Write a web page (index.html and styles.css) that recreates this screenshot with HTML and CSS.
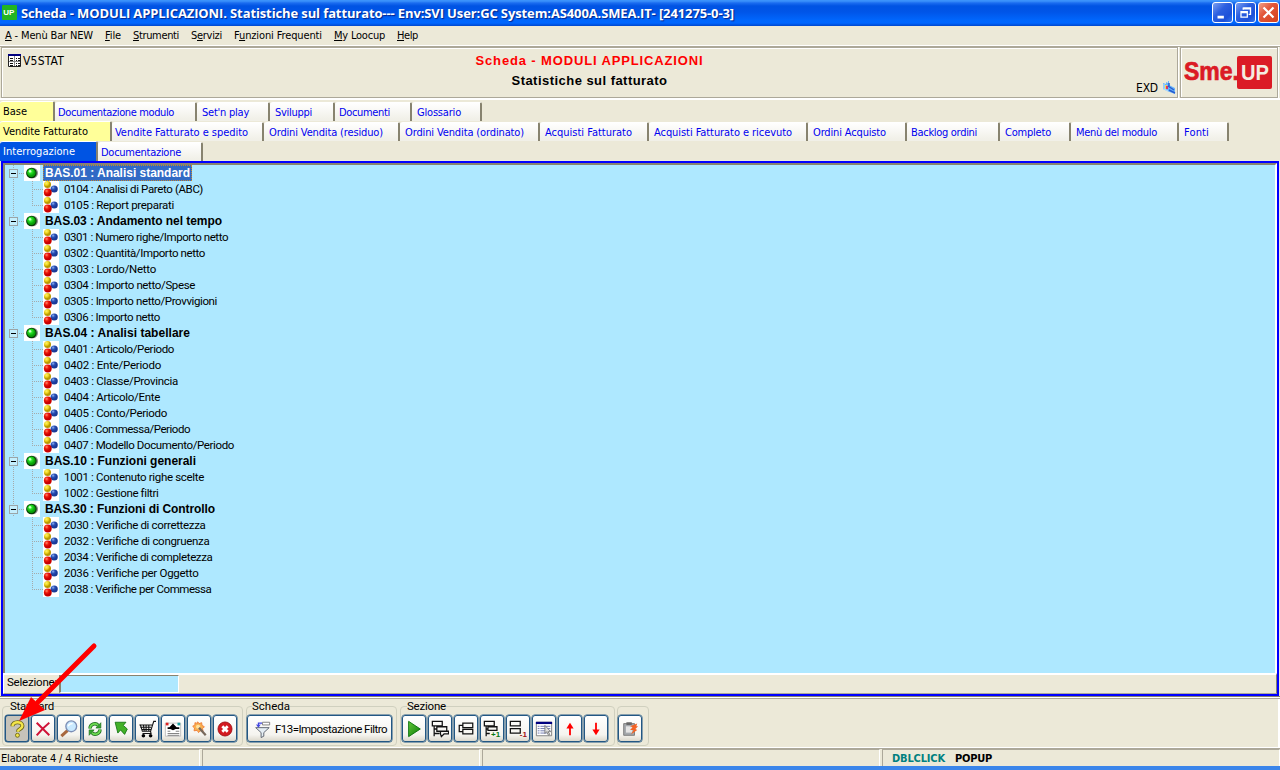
FILE: index.html
```html
<!DOCTYPE html>
<html lang="it">
<head>
<meta charset="utf-8">
<title>Scheda - MODULI APPLICAZIONI</title>
<link rel="stylesheet" href="styles.css">
</head>
<body>
<svg width="0" height="0" class="defs">
  <defs>
    <radialGradient id="gy" cx=".35" cy=".3"><stop offset="0" stop-color="#fff36b"/><stop offset=".6" stop-color="#ecd21c"/><stop offset="1" stop-color="#b99a00"/></radialGradient>
    <radialGradient id="gr" cx=".35" cy=".3"><stop offset="0" stop-color="#ff8a6a"/><stop offset=".5" stop-color="#ee1a0d"/><stop offset="1" stop-color="#c80000"/></radialGradient>
    <radialGradient id="gb" cx=".35" cy=".3"><stop offset="0" stop-color="#8fb0f0"/><stop offset=".5" stop-color="#2a52b8"/><stop offset="1" stop-color="#1a3a98"/></radialGradient>
    <radialGradient id="gg" cx=".4" cy=".35"><stop offset="0" stop-color="#6cff5c"/><stop offset=".5" stop-color="#22d822"/><stop offset="1" stop-color="#08a008"/></radialGradient>
    <linearGradient id="play" x1="0" y1="0" x2="1" y2="1"><stop offset="0" stop-color="#63c837"/><stop offset="1" stop-color="#087a08"/></linearGradient>
  </defs>
  <symbol id="led" viewBox="0 0 16 16"><path fill="#fff" d="M0 0h16v16H0z"/><circle cx="8.800" cy="8" r="5.200" fill="#8b8b8b"/><circle cx="7.400" cy="8" r="5.300" fill="#063b06"/><circle cx="7.300" cy="7.800" r="4.300" fill="url(#gg)"/><circle cx="6" cy="6.300" r="1.200" fill="#c8ffc0"/></symbol>
  <symbol id="balls" viewBox="0 0 16 16"><path fill="#fff" d="M0 0h16v16H0z"/><circle cx="4.500" cy="3.500" r="3.500" fill="url(#gy)"/><circle cx="11.200" cy="8" r="3.600" fill="url(#gb)"/><circle cx="4.800" cy="11.500" r="3.900" fill="url(#gr)"/></symbol>
</svg>

<header class="titlebar">
  <svg class="app" viewBox="0 0 15 15"><rect width="15" height="15" rx="1" fill="#22b522"/><text x="1.300" y="10" font-family="Liberation Sans" font-weight="bold" font-size="8" fill="#fff">UP</text></svg>
  <span class="title" data-w="713">Scheda - MODULI APPLICAZIONI. Statistiche sul fatturato--- Env:SVI User:GC System:AS400A.SMEA.IT- [241275-0-3]</span>
  <div class="winbtns">
    <svg viewBox="0 0 21 21"><path d="M5 14h7v3H5z" fill="#fff"/></svg>
    <svg viewBox="0 0 21 21"><path d="M8 5.500h8v7h-2M8 5v2.500M8 6.500h8" fill="none" stroke="#fff" stroke-width="1.500"/><path d="M5.500 9.500h7v6h-7zM5 10.500h8" fill="none" stroke="#fff" stroke-width="1.400"/></svg>
    <svg class="close" viewBox="0 0 21 21"><path d="M5 5l11 11M16 5L5 16" stroke="#fff" stroke-width="2.500"/></svg>
  </div>
</header>

<nav class="menu">
  <span class="m1"><b data-w="88"><u>A</u> - Menù Bar NEW</b></span>
  <span class="m2"><b data-w="16"><u>F</u>ile</b></span>
  <span class="m3"><b data-w="46"><u>S</u>trumenti</b></span>
  <span class="m4"><b data-w="31">S<u>e</u>rvizi</b></span>
  <span class="m5"><b data-w="88">F<u>u</u>nzioni Frequenti</b></span>
  <span class="m6"><b data-w="51"><u>M</u>y Loocup</b></span>
  <span class="m7"><b data-w="21"><u>H</u>elp</b></span>
</nav>

<section class="head">
  <div class="info">
    <div class="code">
      <svg width="15" height="15" viewBox="0 0 15 15"><path d="M1.500 1.500h12v12h-12z" fill="#fff" stroke="#222"/><path d="M1 1h13v2H1z" fill="#000080"/><path d="M7.500 3v10M2 8.500h11" stroke="#888"/><path d="M3 5.500h3M9 5.500h1M11 5.500h2M3 7.500h3M9 7.500h1M11 7.500h2M3 10.500h3M9 10.500h1M11 10.500h2M3 12.500h3M9 12.500h1M11 12.500h2" stroke="#111"/></svg>
      <span data-w="41">V5STAT</span>
    </div>
    <div class="center"><div class="red"><span data-w="228">Scheda - MODULI APPLICAZIONI</span></div><div><span data-w="156">Statistiche sul fatturato</span></div></div>
    <div class="exd"><span data-w="22">EXD</span>
      <svg width="14" height="14" viewBox="0 0 14 14"><path d="M1 2l3 1V1l2 1V0h1v4l6 3v6L5 10 1 8z" fill="#68b5fa"/><path d="M3 4h2v4H3z" fill="#f7d45a"/><path d="M4 5h2v3H4z" fill="#dd3565"/><path d="M6 5l6 4M7 9l6 3M7 2v3" stroke="#275bd0" stroke-width="1.500"/><path d="M2 3v5l4 2" stroke="#bce4ff" fill="none"/></svg>
    </div>
  </div>
  <div class="logo">
    <svg width="90" height="36" viewBox="0 0 90 36"><rect x="53" y="0" width="35" height="33" rx="2" fill="#db1b25"/><text x="0" y="24" font-family="Liberation Sans" font-weight="bold" font-size="25" fill="#db1b25" stroke="#db1b25" stroke-width=".7" textLength="55" lengthAdjust="spacingAndGlyphs">Sme.</text><text x="57" y="24" font-family="Liberation Sans" font-weight="bold" font-size="22" fill="#f4ece0" textLength="28" lengthAdjust="spacingAndGlyphs">UP</text></svg>
  </div>
</section>

<div class="tabs" id="tabs"></div>

<main class="frame">
  <div class="tree" id="tree"></div>
  <div class="selbar"><span data-w="50">Selezione:</span><div class="field"></div><div class="rest"></div></div>
</main>

<section class="toolbar">
  <fieldset class="g1"><legend data-w="44">Standard</legend>
    <button class="pressed"><svg viewBox="0 0 20 20"><path d="M5 7c0-6 11-6 11-.5 0 4-5 3-5 6.500" fill="none" stroke="#6d6618" stroke-width="4.500"/><path d="M5 7c0-6 11-6 11-.5 0 4-5 3-5 6.500" fill="none" stroke="#f4e64a" stroke-width="2.700"/><circle cx="10.500" cy="17" r="2.200" fill="#f4e64a" stroke="#6d6618"/></svg></button>
    <button><svg viewBox="0 0 20 20"><path d="M3 3c4 4 9 9 14 14M17 3C12 7 7 12 3 17" fill="none" stroke="#cf1237" stroke-width="2.200"/></svg></button>
    <button><svg viewBox="0 0 20 20"><path d="M8.500 11.500l-7 6.500" stroke="#a8683e" stroke-width="3.400"/><circle cx="12.500" cy="7" r="6" fill="#c9e9ff" stroke="#7c8eb5" stroke-width="1.500"/><path d="M9 7c1-3 3-3 5-3" fill="none" stroke="#fff" stroke-width="1.500"/></svg></button>
    <button><svg viewBox="0 0 20 20"><path d="M4.500 9.500c0-5 6-7 9-3.500M15.500 10.500c0 5-6 7-9 3.500" fill="none" stroke="#19691a" stroke-width="3.800"/><path d="M4.500 9.500c0-5 6-7 9-3.500M15.500 10.500c0 5-6 7-9 3.500" fill="none" stroke="#6cd850" stroke-width="2.200"/><path d="M16.500 3v6H11zM3.500 17v-6H9z" fill="#32a42b" stroke="#19691a" stroke-width=".7"/></svg></button>
    <button><svg viewBox="0 0 20 20"><path d="M3.500 2.500h12L12.500 6l4.500 4-3 6-4.500-5-3 3.500z" fill="#43b128" stroke="#187817"/></svg></button>
    <button><svg viewBox="0 0 20 20"><path d="M20 1.500h-2.500l-3.500 11H5M1.500 5.500h14M2.500 8h12M4 10.500h10M2.500 5l2.500 8M6 5l1 8M9 5v8M12 5v8M14 13l.5 2H5" fill="none" stroke="#111" stroke-width="1.200"/><circle cx="6" cy="17.500" r="2"/><circle cx="14" cy="17.500" r="2"/></svg></button>
    <button><svg viewBox="0 0 20 20"><path d="M1.500 3.500h17v14.500h-17z" fill="#fff" stroke="#bbb"/><path d="M2 3h3v3H2z" fill="#d22"/><path d="M15 3h3v3h-3z" fill="#19a0a0"/><path d="M10 4l4 4h3v2h-4l-3 1.500L7 10H4V8h2z"/><path d="M4 12.500h3M13 12.500h4M4 15h13M4 17h13" stroke="#777"/></svg></button>
    <button><svg viewBox="0 0 20 20"><path d="M8.500 2l1.500 2 3-1 .3 3 2.700 1.500-2 2 .5 3-3-.5-2 2-1.500-2.500-3.500.5.500-3-2-2 2.500-1.500V3l3 .8z" fill="#f9b050" stroke="#ee7c34"/><circle cx="9" cy="7.500" r="2.300" fill="#ffe3a0"/><path d="M10 8.500l7.500 8.500" stroke="#77695c" stroke-width="2.500"/></svg></button>
    <button><svg viewBox="0 0 20 20"><circle cx="10" cy="10" r="7.800" fill="#d31920" stroke="#9e0d12"/><path d="M7 7l6 6M13 7l-6 6" stroke="#fff" stroke-width="3"/></svg></button>
  </fieldset>
  <fieldset class="g2"><legend data-w="38">Scheda</legend>
    <button class="wide"><svg viewBox="0 0 20 20"><path d="M3 8.500h15l-6 5.500v4l-3 1.500V14z" fill="#e5eef4" stroke="#555b68"/><path d="M10.500 2.500h8v3h-8z" fill="#fff" stroke="#777"/><path d="M10 3.500H6v4M4 5l2 2.500L8 5" fill="none" stroke="#4146e0" stroke-width="1.300"/></svg><span data-w="112">F13=Impostazione Filtro</span></button>
  </fieldset>
  <fieldset class="g3"><legend data-w="39">Sezione</legend>
    <button><svg viewBox="0 0 20 20"><path d="M4 1.500v17L17 10z" fill="url(#play)" stroke="#08700b"/></svg></button>
    <button><svg class="ln" viewBox="0 0 20 20"><path d="M1.500 1.500h11v5h-11zM6.500 7.500h11v5h-11zM10.500 12.500h9v3h-5l-3 3-1-3zM3.500 7v11M3.500 10h3M3.500 15h6"/></svg></button>
    <button><svg class="ln" viewBox="0 0 20 20"><path d="M6.500 3.500h11v5h-11zM6.500 10.500h11v5h-11zM6 6H2.500v7H6"/></svg></button>
    <button><svg class="ln" viewBox="0 0 20 20"><path d="M1.500 1.500h11v5h-11zM5.500 7.500h10v4h-10zM3.500 7v11M3.500 10h2M3.500 15h4"/><text x="9" y="19" font-size="9" fill="#087a16">+1</text></svg></button>
    <button><svg class="ln" viewBox="0 0 20 20"><path d="M1.500 1.500h11v5h-11zM1.500 9.500h11v5h-11z"/><text x="12" y="19" font-size="9" fill="#a01016">-1</text></svg></button>
    <button><svg viewBox="0 0 20 20"><path d="M1.500 2.500h17v15h-17z" fill="#fff" stroke="#777"/><path d="M1 2h18v2.500H1z" fill="#000080"/><path d="M3 7h2M6 7h11M3 9.500h2M6 9.500h11M3 12h2M6 12h11M3 14.500h2M6 14.500h7" stroke="#6670aa"/><path d="M11 6v9l2-2 2 4 1.500-1-2-3h3z" fill="#ddd" stroke="#777"/></svg></button>
    <button><svg viewBox="0 0 20 20"><path d="M10 3l4 6.500h-3V17H9V9.500H6z" fill="#f00"/></svg></button>
    <button><svg viewBox="0 0 20 20"><path d="M10 17l4-6.500h-3V3H9v7.500H6z" fill="#f00"/></svg></button>
  </fieldset>
  <fieldset class="g4">
    <button><svg viewBox="0 0 20 20"><path d="M3 4h12v13H3z" fill="#a5a9ad" stroke="#777"/><path d="M5.500 7h7v7h-7z" fill="#e4e4e4"/><path d="M6 2.500h6v3H6z" fill="#666"/><path d="M18 4l-8 3 3 1-3 3h4l-3 5 7-5-2-1 3-3h-2z" fill="#f36324"/></svg></button>
  </fieldset>
</section>

<footer class="status">
  <div class="s1"><span data-w="117">Elaborate 4 / 4 Richieste</span></div><div class="s2"></div><div class="s3"></div>
  <div class="s4"><span class="teal" data-w="53">DBLCLICK</span><span data-w="37">POPUP</span></div>
</footer>
<div class="bottom"></div>
<svg class="arrow" width="100" height="90" viewBox="0 0 100 90"><path d="M94 5L38 61" stroke="#f00" stroke-width="5" stroke-linecap="round"/><path d="M19 80L31 56 45 69z" fill="#f00"/></svg>
<script src="app.js"></script>
</body>
</html>
```
FILE: styles.css
```css
* { box-sizing: border-box; }
body { margin: 0; width: 1280px; height: 770px; overflow: hidden; background: #ece9d8; color: #000; display: flex; flex-direction: column; position: relative; font: 11px/16px "DejaVu Sans Condensed", "Noto Sans", sans-serif; }
svg { display: block; }
[data-w] { white-space: nowrap; display: inline-block; }
.defs { position: absolute; }
.titlebar { height: 26px; flex: none; display: flex; align-items: center; padding: 0 2px; background: linear-gradient(#3b92fb 0, #3b92fb 1px, #1a6cf0 3px, #0053e3 6px, #0055e8 12px, #0066fc 20px, #0067ff 23px, #0047cd 26px); }
.app { width: 15px; height: 15px; margin: -2px 4px 0 0; }
.title { flex: none; color: #fff; font: bold 13px/24px "Open Sans", "Noto Sans", sans-serif; text-shadow: 1px 1px 1px #06258a; }
.winbtns { display: flex; gap: 2px; margin: -1px -1px 0 auto; }
.winbtns svg { width: 21px; height: 21px; border: 1px solid #fff; border-radius: 3px; background: linear-gradient(135deg, #7d9ff0, #2c5fe0 40%, #1c50d8 75%, #3477ee); }
.winbtns .close { background: linear-gradient(135deg, #f0a088, #e2573a 40%, #d5401c); }
.menu { height: 20px; flex: none; display: flex; padding: 2px 0 0 5px; border-bottom: 1px solid #fff; }
.menu b { font-weight: normal; }
.menu u { text-underline-offset: 1px; }
.menu span { flex: none; }
.m1 { width: 100px; } .m2 { width: 28px; } .m3 { width: 58px; } .m4 { width: 43px; } .m5 { width: 100px; } .m6 { width: 63px; }
.head { height: 54px; flex: none; display: flex; gap: 2px; padding: 0 2px 0 1px; border-top: 1px solid #aca899; border-bottom: 2px solid #fff; }
.info, .logo { border: 1px solid #aca899; box-shadow: inset 1px 1px #fff, 1px 0 #fff; }
.info { width: 1177px; display: grid; grid-template-columns: 200px 1fr 200px; }
.code { display: flex; padding: 5px 0 0 5px; gap: 1px; font-size: 12px; }
.center { font: bold 13px/20px "Liberation Sans", sans-serif; text-align: center; padding-top: 3px; }
.red { color: #f00; }
.exd { display: flex; justify-content: flex-end; align-items: flex-end; gap: 4px; padding: 0 1px 1px 0; font-size: 12px; }
.exd svg { margin-bottom: 1px; }
.logo { flex: 1; padding: 8px 0 0 3px; }
.tabs { height: 61px; flex: none; padding-top: 1px; }
.tabrow { height: 20px; display: flex; }
.tab { flex: none; height: 19px; margin-top: 1px; border-right: 2px solid #87836f; border-top: 1px solid #fff; border-radius: 3px 2px 0 0; background: linear-gradient(#fff, #f1f0e8 90%); color: #0000f0; line-height: 20px; }
.tab.on { height: 20px; margin-top: 0; background: #ffff99; color: #000; line-height: 19px; }
.tab.blue { background: #0054e3; color: #fff; }
.frame { height: 535px; flex: none; margin: 0 1px; border: 2px solid #00f; display: flex; flex-direction: column; }
.tree { height: 510px; flex: none; background: #aee8ff; border: 2px solid #fff; border-left-color: #87836f; border-top-color: #87836f; border-bottom: 0; font: 11.5px/16px Roboto, "Liberation Sans", sans-serif; }
.row { height: 16px; display: flex; }
.spine { width: 19px; flex: none; background: repeating-linear-gradient(#a5aaaa 0 1px, transparent 1px 2px) 8px 0 / 1px 16px no-repeat; }
.lastgroup .spine { background: none; }
.group .spine { display: flex; align-items: center; padding-left: 4px; background-image: repeating-linear-gradient(#a5aaaa 0 1px, transparent 1px 2px), repeating-linear-gradient(90deg, #a5aaaa 0 1px, transparent 1px 2px); background-position: 8px 0, 14px 8px; background-size: 1px 16px, 5px 1px; background-repeat: no-repeat; }
.box { width: 9px; height: 9px; border: 1px solid #9aa5a8; background: linear-gradient(#000, #000) 1px 3px / 5px 1px no-repeat #c3eefd; }
.row svg { width: 16px; height: 16px; flex: none; }
.group span { font: bold 12px/16px "Liberation Sans", sans-serif; }
.name { height: 16px; margin-left: 3px; padding: 0 2px; }
.sel .name { background: #316ac5; color: #fff; outline: 1px dotted #c88a30; outline-offset: -1px; }
.branch { width: 19px; flex: none; background: repeating-linear-gradient(#a5aaaa 0 1px, transparent 1px 2px) 8px 0 / 1px 16px no-repeat, repeating-linear-gradient(90deg, #a5aaaa 0 1px, transparent 1px 2px) 8px 8px / 11px 1px no-repeat; }
.last .branch { background-size: 1px 8px, 11px 1px; }
.selbar { height: 21px; flex: none; border-top: 2px solid #fff; display: flex; font: 11.5px/15px Roboto, "Liberation Sans", sans-serif; padding-left: 3px; border-right: 1px solid #87836f; border-left: 1px solid #fff; border-bottom: 1px solid #aca899; }
.field { width: 120px; margin-left: 2px; border: 1px solid #fff; border-left: 2px solid #87836f; border-top-color: #87836f; background: #aee8ff; }
.rest { flex: 1; }
.toolbar { height: 53px; flex: none; display: flex; gap: 3px; padding: 4px 0 0 2px; border-top: 1px solid #87836f; border-bottom: 1px solid #aca899; box-shadow: inset 0 1px #fff, inset 0 2px #aca899, inset -2px 0 #fff, inset 0 -1px #fff; font: 11.5px/13px Roboto, "Liberation Sans", sans-serif; }
fieldset { height: 45px; min-width: 0; margin: 0; padding: 4px 0 0 2px; border: 1px solid #d0d0bf; border-radius: 4px; display: flex; gap: 2px; }
legend { padding: 0; margin-left: 5px; height: 10px; line-height: 11px; }
.g1 { width: 241px; } .g2 { width: 151px; padding-left: 0; } .g3 { width: 215px; padding-left: 1px; }
.g4 { width: 32px; margin: 5px 0 0 -1px; height: 40px; padding: 8px 0 0 0; }
button { width: 24px; height: 27px; flex: none; padding: 0; margin: 0; border: 1px solid #225784; border-radius: 3px; background: linear-gradient(#fff, #f5f4ef 75%, #dcd8cc); box-shadow: 0 0 0 .5px #225784; display: flex; align-items: center; justify-content: center; font: 11.5px/16px Roboto, "Liberation Sans", sans-serif; color: #000; }
button svg { width: 18px; height: 18px; flex: none; }
.pressed { background: #c6c3ba; }
.wide { width: 145px; justify-content: flex-start; padding-left: 5px; gap: 4px; }
.ln { fill: none; stroke: #111; stroke-width: 1.4; }
.ln text { stroke: none; font-family: "Liberation Sans"; font-weight: bold; }
.status { height: 17px; flex: none; display: flex; gap: 2px; line-height: 17px; }
.status div { border-left: 1px solid #aca899; border-top: 1px solid #aca899; border-right: 1px solid #fff; }
.status .s1 { border-left: 0; padding-left: 1px; }
.s1 { width: 200px; } .s2 { width: 278px; } .s3 { width: 398px; }
.s4 { flex: 1; padding-left: 9px; font-weight: bold; display: flex; gap: 10px; }
.teal { color: #008080; }
.bottom { height: 4px; flex: none; background: #3a85ea; }
.arrow { position: absolute; left: 0; top: 641px; }
```
FILE: app.js
```js
// tabs: [label, text left, text width, right edge]
const tabRows = [
  [['Base', 3, 24, 55], ['Documentazione modulo', 58, 116, 197], ["Set'n play", 202, 47, 270], ['Sviluppi', 275, 37, 335], ['Documenti', 339, 51, 412], ['Glossario', 417, 44, 482]],
  [['Vendite Fatturato', 3, 85, 112], ['Vendite Fatturato e spedito', 115, 133, 264], ['Ordini Vendita (residuo)', 269, 114, 400], ['Ordini Vendita (ordinato)', 405, 119, 540], ['Acquisti Fatturato', 545, 87, 649], ['Acquisti Fatturato e ricevuto', 654, 138, 808], ['Ordini Acquisto', 813, 73, 907], ['Backlog ordini', 911, 66, 1000], ['Completo', 1005, 46, 1071], ['Menù del modulo', 1076, 81, 1179], ['Fonti', 1184, 25, 1229]],
  [['Interrogazione', 3, 72, 98], ['Documentazione', 101, 80, 203]]
];
let html = '';
tabRows.forEach((row, r) => {
  let x = 0;
  html += '<div class="tabrow">';
  row.forEach(([label, tx, w, end], i) => {
    const cls = i ? 'tab' : r === 2 ? 'tab on blue' : 'tab on';
    html += `<div class="${cls}" style="width:${end - x}px;padding-left:${tx - x}px"><span data-w="${w}">${label}</span></div>`;
    x = end;
  });
  html += '</div>';
});
document.getElementById('tabs').innerHTML = html;

const groups = [
  ['BAS.01 : Analisi standard', 145, [['0104 : Analisi di Pareto (ABC)', 139], ['0105 : Report preparati', 110]]],
  ['BAS.03 : Andamento nel tempo', 177, [['0301 : Numero righe/Importo netto', 164], ['0302 : Quantità/Importo netto', 141], ['0303 : Lordo/Netto', 92], ['0304 : Importo netto/Spese', 131], ['0305 : Importo netto/Provvigioni', 153], ['0306 : Importo netto', 96]]],
  ['BAS.04 : Analisi tabellare', 145, [['0401 : Articolo/Periodo', 110], ['0402 : Ente/Periodo', 97], ['0403 : Classe/Provincia', 114], ['0404 : Articolo/Ente', 96], ['0405 : Conto/Periodo', 103], ['0406 : Commessa/Periodo', 126], ['0407 : Modello Documento/Periodo', 170]]],
  ['BAS.10 : Funzioni generali', 151, [['1001 : Contenuto righe scelte', 140], ['1002 : Gestione filtri', 94]]],
  ['BAS.30 : Funzioni di Controllo', 170, [['2030 : Verifiche di correttezza', 141], ['2032 : Verifiche di congruenza', 145], ['2034 : Verifiche di completezza', 148], ['2036 : Verifiche per Oggetto', 134], ['2038 : Verifiche per Commessa', 147]]]
];
document.getElementById('tree').innerHTML = groups.map(([name, w, kids], g) =>
  `<div class="${g === groups.length - 1 ? 'lastgroup' : ''}"><div class="row group ${g ? '' : 'sel'}"><div class="spine"><div class="box"></div></div><svg><use href="#led"/></svg><div class="name"><span data-w="${w}">${name}</span></div></div>` +
  kids.map(([k, kw], i) => `<div class="row ${i === kids.length - 1 ? 'last' : ''}"><div class="spine"></div><div class="branch"></div><svg><use href="#balls"/></svg><div class="name"><span data-w="${kw}">${k}</span></div></div>`).join('') + '</div>'
).join('');

// Spread the letters of each label over its nominal width.
document.querySelectorAll('[data-w]').forEach(el => {
  const w = +el.dataset.w;
  const natural = el.getBoundingClientRect().width;
  el.style.letterSpacing = (w - natural) / el.textContent.length + 'px';
});
```
